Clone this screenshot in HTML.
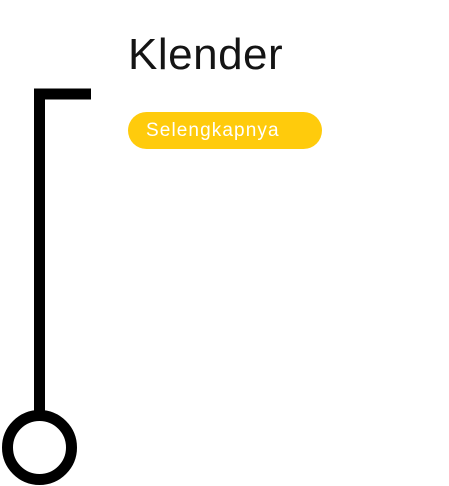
<!DOCTYPE html>
<html><head><style>
html,body{margin:0;padding:0;background:#fff;width:449px;height:486px;overflow:hidden;position:relative;font-family:"Liberation Sans",sans-serif}
.t{position:absolute;left:128px;top:29px;font-size:44px;line-height:52px;color:#141414;letter-spacing:0.5px}
.p{position:absolute;left:128px;top:112px;width:194px;height:37px;border-radius:19px;background:#FFCB0C}
.p span{position:absolute;left:18px;top:8px;font-size:19px;line-height:22px;color:#fff;letter-spacing:1.1px}
</style></head><body>
<svg width="449" height="486" style="position:absolute;left:0;top:0">
<path d="M39.5 413 V94 H91" fill="none" stroke="#000" stroke-width="11"/>
<circle cx="39.5" cy="447.5" r="32" fill="none" stroke="#000" stroke-width="11"/>
</svg>
<div class="t">Klender</div>
<div class="p"><span>Selengkapnya</span></div>
</body></html>
